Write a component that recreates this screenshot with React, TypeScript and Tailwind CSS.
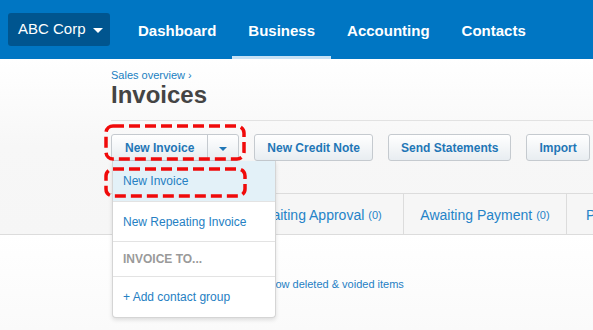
import React from 'react'

const nav = ['Dashboard', 'Business', 'Accounting', 'Contacts']

// the first two tabs sit under the open menu, so only their cells are drawn
const tabs = [
  { label: '', count: null, w: 'w-[46px] justify-center' },
  { label: '', count: null, w: 'w-[75px] justify-center' },
  { label: 'Awaiting Approval', count: '(0)', w: 'w-[172px] justify-center' },
  { label: 'Awaiting Payment', count: '(0)', w: 'w-[163px] justify-center' },
  { label: 'Paid', count: '(0)', w: 'w-[120px] pl-[19px]' },
]

function Btn({ children }: { children: React.ReactNode }) {
  return (
    <button className="h-[27px] rounded-[3px] border border-[#c5cacf] bg-gradient-to-b from-white to-[#e8edf1] px-3 text-[12px] font-bold text-[#1f76b6]">
      {children}
    </button>
  )
}

function DashedBox({ x, y, w, h }: { x: number; y: number; w: number; h: number }) {
  return (
    <svg
      className="pointer-events-none absolute"
      style={{ left: x, top: y }}
      width={w}
      height={h}
    >
      <rect
        x={2}
        y={2}
        width={w - 4}
        height={h - 4}
        rx={7}
        fill="none"
        stroke="#f00a0a"
        strokeWidth={3.5}
        strokeDasharray="11 5"
      />
    </svg>
  )
}

export default function App() {
  return (
    <div className="relative h-[330px] w-[593px] overflow-hidden bg-white font-['Liberation_Sans',Arial,sans-serif]">
      <header className="flex h-[59px] items-stretch bg-[#0076c3]">
        <div className="ml-2 mt-[13px] flex h-[33px] w-[102px] items-center rounded-[3px] bg-[#00558f] pl-[10px] text-[15px] text-white">
          ABC Corp
          <span className="ml-[7px] mt-[1px] h-0 w-0 border-x-[5px] border-t-[5px] border-x-transparent border-t-white" />
        </div>
        <nav className="ml-3 flex">
          {nav.map((n) => (
            <div
              key={n}
              className={`flex items-center border-b-[3px] px-4 pt-[6px] text-[15px] font-bold text-white ${
                n === 'Business' ? 'border-[#c5e1f5]' : 'border-transparent'
              }`}
            >
              {n}
            </div>
          ))}
        </nav>
      </header>

      <section className="bg-gradient-to-b from-white via-[#f7f7f7] to-[#f6f6f6]">
        <div className="pl-[111px] pt-[10px]">
          <div className="text-[11px] leading-[13px] text-[#1a7fc1]">Sales overview ›</div>
          <h1 className="mt-[-1px] text-[24px] font-bold leading-[28px] text-[#444]">Invoices</h1>
          <div className="mt-[11px] border-t border-[#e2e2e2]" />
          <div className="mt-[13px] flex gap-[15px]">
            <div className="flex h-[27px] rounded-[3px] border border-[#c5cacf] bg-gradient-to-b from-white to-[#e8edf1] text-[12px] font-bold text-[#1f76b6]">
              <span className="flex items-center border-r border-[#c5cacf] px-[13px]">New Invoice</span>
              <span className="flex w-[30px] items-center justify-center pt-[3px]">
                <span className="h-0 w-0 border-x-[4px] border-t-[4px] border-x-transparent border-t-[#1f76b6]" />
              </span>
            </div>
            <Btn>New Credit Note</Btn>
            <Btn>Send Statements</Btn>
            <Btn>Import</Btn>
          </div>
        </div>
        <div className="mt-[32px] border-b border-[#dcdcdc] pl-[111px]">
          <div className="flex h-[41px] border-t border-[#dcdcdc] bg-[#f6f6f6]">
            {tabs.map((t, i) => (
              <div
                key={i}
                className={`${t.w} flex shrink-0 items-center whitespace-nowrap border-r border-[#dcdcdc] pt-[2px] text-[14px] text-[#2583c8]`}
              >
                {t.label}
                {t.count && <span className="ml-1 text-[11px]">{t.count}</span>}
              </div>
            ))}
          </div>
        </div>
      </section>

      <div className="h-[96px] bg-gradient-to-b from-white to-[#fafafa] pl-[262px] pt-[41px] text-[11px] text-[#1f80c4]">
        Show deleted &amp; voided items
      </div>

      <div className="absolute left-[112px] top-[161px] w-[164px] rounded-b-[4px] border border-t-0 border-[#d5d5d5] bg-white text-[12px] shadow-[0_2px_4px_rgba(0,0,0,0.12)]">
        <div className="flex h-[41px] items-center border-b border-[#e3e3e3] bg-[#e3f1f8] px-[10px] text-[#2580c3]">New Invoice</div>
        <div className="flex h-[40px] items-center border-b border-[#e3e3e3] px-[10px] text-[#2580c3]">New Repeating Invoice</div>
        <div className="flex h-[35px] items-center border-b border-[#e3e3e3] px-[10px] font-bold text-[#9a9a9a]">INVOICE TO...</div>
        <div className="flex h-[40px] items-center px-[10px] text-[#2580c3]">+ Add contact group</div>
      </div>

      <DashedBox x={104} y={124} w={142} h={37} />
      <DashedBox x={104} y={167} w={143} h={31} />
    </div>
  )
}
